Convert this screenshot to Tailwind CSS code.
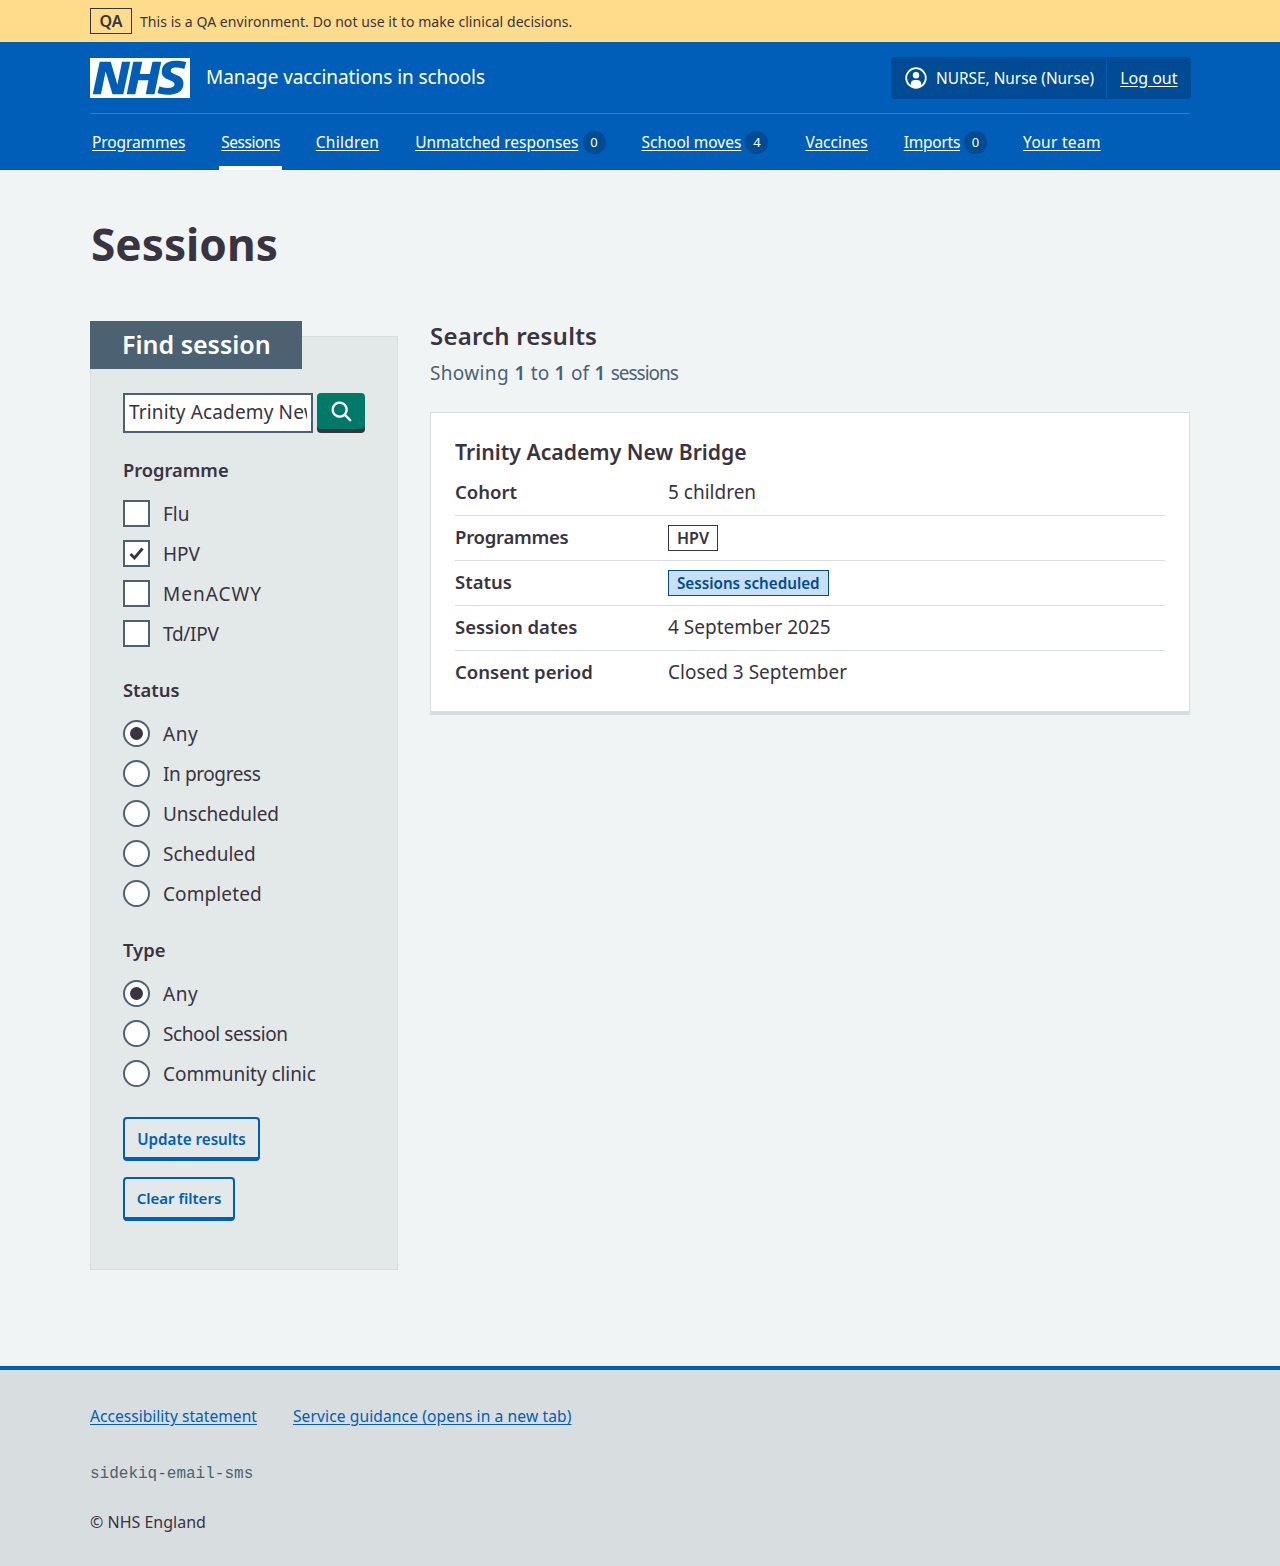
<!DOCTYPE html>
<html lang="en">
<head>
  <meta charset="UTF-8">
  <meta name="viewport" content="width=device-width, initial-scale=1.0">
  <title>Sessions - Manage vaccinations in schools</title>
  <script src="https://cdn.jsdelivr.net/npm/@tailwindcss/browser@4"></script>
</head>
<body class="bg-[#f0f4f5] text-[#3a3340] font-['Noto_Sans',sans-serif]">
  <!-- Environment banner -->
  <div class="bg-[#ffdb8c] h-[42px]">
    <div class="w-[1100px] mx-auto pt-[8px] flex items-center">
      <span class="border border-[#3a3340] h-[26px] w-[42px] flex items-center justify-center font-semibold text-[16px]">QA</span>
      <span class="ml-[8px] text-[14px] tracking-[0.06px]">This is a QA environment. Do not use it to make clinical decisions.</span>
    </div>
  </div>

  <!-- Header -->
  <header class="bg-[#005eb8] h-[128px] text-white">
    <div class="w-[1100px] mx-auto">
      <div class="h-[72px] border-b border-[#2f7bc6] flex items-center justify-between">
        <div class="flex items-center">
          <svg class="w-[100px] h-[40px]" viewBox="0 0 40 16" preserveAspectRatio="none"><path fill="#fff" d="M0 0h40v16H0z"></path><path fill="#005eb8" d="M3.9 1.5h4.4l2.6 9h.1l1.8-9h3.3l-2.8 13H9l-2.7-9h-.1l-1.8 9H1.1M17.3 1.5h3.6l-1 4.9h4L25 1.5h3.5l-2.7 13h-3.5l1.1-5.6h-4.1l-1.2 5.6h-3.4M37.7 4.4c-.7-.3-1.6-.6-2.9-.6-1.4 0-2.5.2-2.5 1.3 0 1.8 5.1 1.2 5.1 5.1 0 3.6-3.3 4.5-6.4 4.5-1.3 0-2.9-.3-4-.7l.8-2.7c.7.4 2.1.7 3.2.7s2.8-.2 2.8-1.5c0-2.1-5.1-1.3-5.1-5 0-3.4 2.9-4.4 5.8-4.4 1.6 0 3.1.2 4 .6"></path></svg>
          <span class="ml-[16px] text-[19px] tracking-[-0.07px]">Manage vaccinations in schools</span>
        </div>
        <div class="bg-[#004b93] rounded-[4px] h-[42px] w-[300px] mr-[-1px] flex items-center text-[16px]">
          <svg class="ml-[13px] w-[24px] h-[24px]" viewBox="0 0 24 24"><circle cx="12" cy="12" r="9.8" fill="none" stroke="#fff" stroke-width="1.8"/><circle cx="12" cy="9.2" r="3.2" fill="#fff"/><path fill="#fff" d="M6.8 19.5v-1.8c0-2.2 1.8-3.7 3.8-3.7h2.8c2 0 3.8 1.5 3.8 3.7v1.8c-1.5 1.2-3.3 1.8-5.2 1.8s-3.7-.6-5.2-1.8z"/></svg>
          <span class="ml-[8px] pt-[2px] text-[15.4px]">NURSE, Nurse (Nurse)</span>
          <span class="ml-[12px] h-[40px] border-l border-[#005eb8]"></span>
          <a href="#" class="ml-[13px] underline underline-offset-2">Log out</a>
        </div>
      </div>
      <nav class="h-[56px] flex items-start gap-[32px] text-[15.5px]">
        <a href="#" class="px-[2px] h-[56px] pt-[17px] underline underline-offset-2 tracking-[-0.1px]">Programmes</a>
        <a href="#" class="px-[2px] h-[56px] pt-[17px] underline underline-offset-2 border-b-[4px] border-white tracking-[-0.5px]">Sessions</a>
        <a href="#" class="px-[2px] h-[56px] pt-[17px] underline underline-offset-2 tracking-[0.25px]">Children</a>
        <div class="px-[2px] h-[56px] pt-[17px] flex items-start"><a href="#" class="underline underline-offset-2">Unmatched responses</a><span class="ml-[4px] w-[23px] h-[23px] rounded-full bg-[#004b93] text-[13px] flex items-center justify-center">0</span></div>
        <div class="px-[2px] h-[56px] pt-[17px] flex items-start"><a href="#" class="underline underline-offset-2">School moves</a><span class="ml-[4px] w-[23px] h-[23px] rounded-full bg-[#004b93] text-[13px] flex items-center justify-center">4</span></div>
        <a href="#" class="ml-[1px] px-[2px] h-[56px] pt-[17px] underline underline-offset-2">Vaccines</a>
        <div class="px-[2px] h-[56px] pt-[17px] flex items-start"><a href="#" class="underline underline-offset-2 tracking-[-0.25px]">Imports</a><span class="ml-[4px] w-[23px] h-[23px] rounded-full bg-[#004b93] text-[13px] flex items-center justify-center">0</span></div>
        <a href="#" class="px-[2px] h-[56px] pt-[17px] underline underline-offset-2 tracking-[0.3px]">Your team</a>
      </nav>
    </div>
  </header>

  <!-- Main content -->
  <main class="w-[1100px] mx-auto h-[1196px] pt-[38px]">
    <h1 class="text-[44.2px] leading-[72px] font-bold pl-px">Sessions</h1>
    <div class="mt-[41px] flex items-start">
      <!-- Filters -->
      <aside class="w-[308px] h-[949px] relative pt-[15px]">
        <div class="h-[934px] bg-[#e3e8e8] border border-[#d8dde0] pl-[32px] pt-[56px]">
          <div class="absolute left-0 top-0 w-[212px] h-[48px] bg-[#4c6272] text-white text-[25px] leading-[47px] font-semibold pl-[32px]">Find session</div>
          <div class="flex gap-[4px]">
            <input type="text" value="Trinity Academy New Bridge" class="w-[190px] h-[40px] bg-white border-2 border-[#4c6272] px-[4px] text-[19px] tracking-[0.15px] pb-[2px]">
            <div class="w-[48px] bg-[#007a68] rounded-[4px] shadow-[0_4px_0_#3a3340] h-[36px] flex items-center justify-center">
              <svg class="w-[28px] h-[28px] ml-[2px] mt-[2px]" viewBox="0 0 24 24" fill="#fff"><path d="M19.71 18.29l-4.11-4.1a7 7 0 1 0-1.41 1.41l4.1 4.11a1 1 0 0 0 1.42 0 1 1 0 0 0 0-1.42zM5 10a5 5 0 1 1 5 5 5 5 0 0 1-5-5z"/></svg>
            </div>
          </div>

          <h2 class="mt-[23px] text-[18.3px] leading-[28px] font-semibold">Programme</h2>
          <div class="mt-[16px] flex flex-col gap-[13px] text-[19px]">
            <label class="flex items-center h-[27px]"><span class="w-[27px] h-[27px] bg-white border-2 border-[#4c6272]"></span><span class="ml-[13px] pt-[2px]">Flu</span></label>
            <label class="flex items-center h-[27px]"><span class="w-[27px] h-[27px] bg-white border-2 border-[#4c6272] flex items-center justify-center"><svg class="w-[15px] h-[13px]" viewBox="0 0 15 13"><path d="M1.5 7l4 4 8-9.5" fill="none" stroke="#3a3340" stroke-width="2.8"/></svg></span><span class="ml-[13px] pt-[2px]">HPV</span></label>
            <label class="flex items-center h-[27px]"><span class="w-[27px] h-[27px] bg-white border-2 border-[#4c6272]"></span><span class="ml-[13px] pt-[2px] tracking-[1px]">MenACWY</span></label>
            <label class="flex items-center h-[27px]"><span class="w-[27px] h-[27px] bg-white border-2 border-[#4c6272]"></span><span class="ml-[13px] pt-[2px] tracking-[-0.3px]">Td/IPV</span></label>
          </div>

          <h2 class="mt-[29px] text-[18.4px] leading-[28px] font-semibold">Status</h2>
          <div class="mt-[16px] flex flex-col gap-[13px] text-[19px]">
            <label class="flex items-center h-[27px]"><span class="w-[27px] h-[27px] rounded-full bg-white border-2 border-[#4c6272] flex items-center justify-center"><span class="w-[13px] h-[13px] rounded-full bg-[#3a3340]"></span></span><span class="ml-[13px] pt-[2px] tracking-[0.6px]">Any</span></label>
            <label class="flex items-center h-[27px]"><span class="w-[27px] h-[27px] rounded-full bg-white border-2 border-[#4c6272]"></span><span class="ml-[13px] pt-[2px] tracking-[-0.4px]">In progress</span></label>
            <label class="flex items-center h-[27px]"><span class="w-[27px] h-[27px] rounded-full bg-white border-2 border-[#4c6272]"></span><span class="ml-[13px] pt-[2px] tracking-[-0.1px]">Unscheduled</span></label>
            <label class="flex items-center h-[27px]"><span class="w-[27px] h-[27px] rounded-full bg-white border-2 border-[#4c6272]"></span><span class="ml-[13px] pt-[2px]">Scheduled</span></label>
            <label class="flex items-center h-[27px]"><span class="w-[27px] h-[27px] rounded-full bg-white border-2 border-[#4c6272]"></span><span class="ml-[13px] pt-[2px] tracking-[0.1px]">Completed</span></label>
          </div>

          <h2 class="mt-[29px] text-[18.4px] leading-[28px] font-semibold">Type</h2>
          <div class="mt-[16px] flex flex-col gap-[13px] text-[19px]">
            <label class="flex items-center h-[27px]"><span class="w-[27px] h-[27px] rounded-full bg-white border-2 border-[#4c6272] flex items-center justify-center"><span class="w-[13px] h-[13px] rounded-full bg-[#3a3340]"></span></span><span class="ml-[13px] pt-[2px] tracking-[0.6px]">Any</span></label>
            <label class="flex items-center h-[27px]"><span class="w-[27px] h-[27px] rounded-full bg-white border-2 border-[#4c6272]"></span><span class="ml-[13px] pt-[2px] tracking-[-0.4px]">School session</span></label>
            <label class="flex items-center h-[27px]"><span class="w-[27px] h-[27px] rounded-full bg-white border-2 border-[#4c6272]"></span><span class="ml-[13px] pt-[2px] tracking-[-0.05px]">Community clinic</span></label>
          </div>

          <div class="mt-[30px] flex flex-col items-start gap-[16px]">
            <button class="h-[44px] w-[137px] border-2 border-b-[4px] border-[#005eb8] rounded-[4px] text-[#005eb8] text-[15.2px] font-semibold pt-[2px]">Update results</button>
            <button class="h-[44px] w-[112px] border-2 border-b-[4px] border-[#005eb8] rounded-[4px] text-[#005eb8] text-[15px] font-semibold pt-[1px]">Clear filters</button>
          </div>
        </div>
      </aside>

      <!-- Results -->
      <section class="ml-[32px] w-[760px]">
        <h2 class="text-[24px] leading-[32px] font-semibold tracking-[0.2px] mt-[-1px]">Search results</h2>
        <p class="mt-[7px] text-[19px] leading-[28px] text-[#4c6272] [word-spacing:0.5px]"><span class="tracking-[0.35px]">Showing</span> <b class="font-semibold">1</b> to <b class="font-semibold">1</b> of <b class="font-semibold">1</b> <span class="tracking-[-1px]">sessions</span></p>
        <div class="mt-[25px] h-[303px] bg-white border border-[#d8dde0] border-b-[4px] px-[24px] pt-[23px]">
          <h3 class="text-[21.2px] leading-[32px] font-semibold">Trinity Academy New Bridge</h3>
          <dl class="text-[19px]">
            <div class="h-[45px] flex items-center border-b border-[#d8dde0] mt-[3px]"><dt class="w-[213px] mb-[2px] font-semibold text-[18.5px]">Cohort</dt><dd class="mb-[2px]">5 children</dd></div>
            <div class="h-[45px] flex items-center border-b border-[#d8dde0]"><dt class="w-[213px] mb-[2px] font-semibold text-[18.5px] tracking-[-0.25px]">Programmes</dt><dd class="border border-[#3a3340] h-[26px] px-[8px] text-[16px] font-semibold flex items-center">HPV</dd></div>
            <div class="h-[45px] flex items-center border-b border-[#d8dde0]"><dt class="w-[213px] mb-[2px] font-semibold text-[18.5px]">Status</dt><dd class="border border-[#004b93] bg-[#c8e0f3] text-[#004b93] h-[26px] px-[8px] text-[15.2px] font-semibold flex items-center">Sessions scheduled</dd></div>
            <div class="h-[45px] flex items-center border-b border-[#d8dde0]"><dt class="w-[213px] mb-[2px] font-semibold text-[18.5px]">Session dates</dt><dd class="mb-[2px]">4 September 2025</dd></div>
            <div class="h-[45px] flex items-center"><dt class="w-[213px] mb-[3px] font-semibold text-[18.5px]">Consent period</dt><dd class="mb-[2px]">Closed 3 September</dd></div>
          </dl>
        </div>
      </section>
    </div>
  </main>

  <!-- Footer -->
  <footer class="bg-[#d8dde0] border-t-[4px] border-[#005eb8] h-[200px]">
    <div class="w-[1100px] mx-auto pt-[34px] text-[16px]">
      <div class="flex gap-[36px] text-[#005eb8] text-[15.6px] leading-[24px]">
        <a href="#" class="underline underline-offset-2">Accessibility statement</a>
        <a href="#" class="underline underline-offset-2 tracking-[0.1px]">Service guidance (opens in a new tab)</a>
      </div>
      <p class="mt-[34px] leading-[24px] text-[#4c6272] font-['Liberation_Mono',monospace]">sidekiq-email-sms</p>
      <p class="mt-[24px] leading-[24px]">© NHS England</p>
    </div>
  </footer>
</body>
</html>
